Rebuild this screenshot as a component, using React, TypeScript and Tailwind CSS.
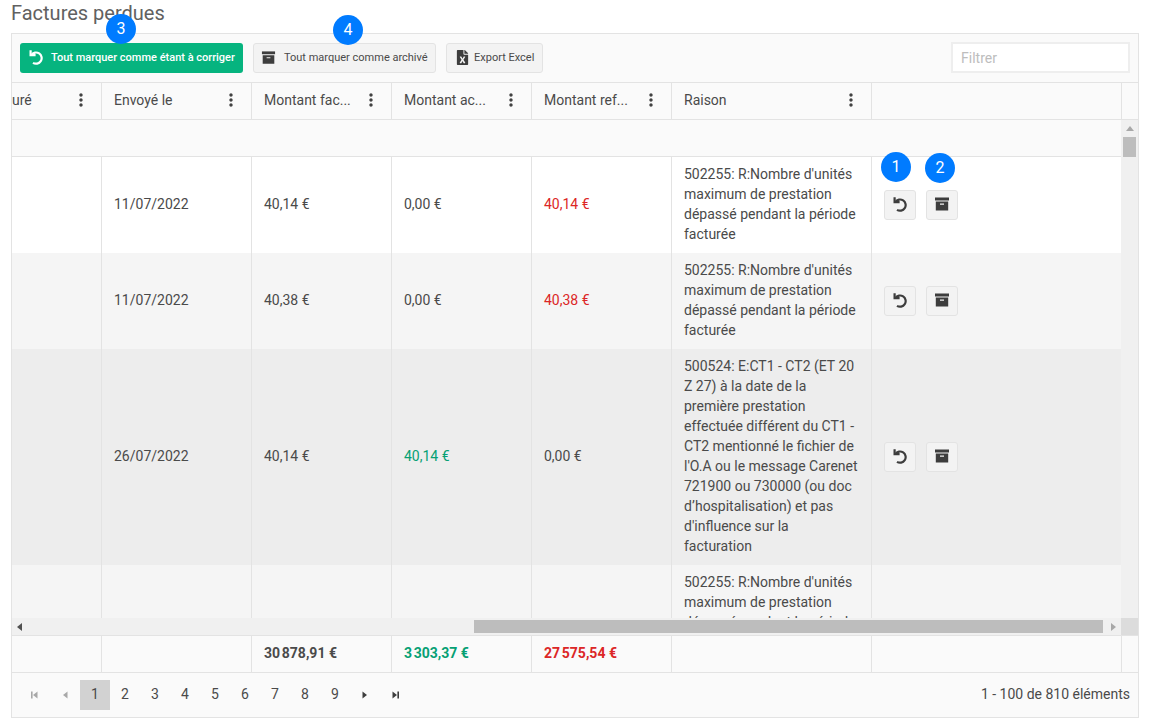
import { MdMoreVert } from "react-icons/md";
import { FaFileExcel } from "react-icons/fa";

const UndoIcon = ({ size = 16, color = "#3d3d3d" }: { size?: number; color?: string }) => (
  <svg width={size} height={size} viewBox="0 0 16 16" fill="none" stroke={color} strokeWidth="2.2">
    <path d="M2.6 1.2v5h5" />
    <path d="M3.4 6 A5.6 5.6 0 1 1 5 13.8" />
  </svg>
);

const ArchiveIcon = ({ size = 16 }: { size?: number }) => (
  <svg width={size} height={size} viewBox="0 0 16 16" fill="#3d3d3d">
    <rect x="1" y="1.5" width="14" height="3" />
    <path d="M1.8 5.6h12.4v9H1.8z M6 7.6v1.2h4V7.6z" fillRule="evenodd" />
  </svg>
);

const PagerArrow = ({ dir, bar, color }: { dir: "left" | "right"; bar?: boolean; color: string }) => (
  <svg width="8" height="8" viewBox="0 0 8 8" fill={color}>
    {dir === "left" ? <path d="M6.5 0.5v7L2 4z" /> : <path d="M1.5 0.5v7L6 4z" />}
    {bar && <rect x={dir === "left" ? 0 : 6.4} y="0.5" width="1.6" height="7" />}
  </svg>
);

const columns = ["uré", "Envoyé le", "Montant fac...", "Montant ac...", "Montant ref...", "Raison"];

const grid = "grid grid-cols-[90px_150px_140px_140px_140px_200px_250px]";
const cell = "border-r border-[#e3e3e3] px-3 flex items-center";

const reason1 =
  "502255: R:Nombre d'unités maximum de prestation dépassé pendant la période facturée";
const reason2 =
  "500524: E:CT1 - CT2 (ET 20 Z 27) à la date de la première prestation effectuée différent du CT1 - CT2 mentionné le fichier de l'O.A ou le message Carenet 721900 ou 730000 (ou doc d’hospitalisation) et pas d'influence sur la facturation";

const rows = [
  { date: "11/07/2022", fac: "40,14 €", ac: "0,00 €", ref: "40,14 €", reason: reason1, bg: "bg-white", h: "h-[96px]", acGreen: false, refRed: true },
  { date: "11/07/2022", fac: "40,38 €", ac: "0,00 €", ref: "40,38 €", reason: reason1, bg: "bg-[#f5f5f5]", h: "h-[96px]", acGreen: false, refRed: true },
  { date: "26/07/2022", fac: "40,14 €", ac: "40,14 €", ref: "0,00 €", reason: reason2, bg: "bg-[#ededed]", h: "h-[216px]", acGreen: true, refRed: false },
  { date: "", fac: "", ac: "", ref: "", reason: reason1, bg: "bg-[#f5f5f5]", h: "h-[96px]", acGreen: false, refRed: false },
];

const Badge = ({ n, className }: { n: number; className: string }) => (
  <span className={"absolute w-[30px] h-[30px] rounded-full bg-[#007bff] text-white text-[16px] flex items-center justify-center " + className}>
    {n}
  </span>
);

const IconButton = ({ children }: { children: React.ReactNode }) => (
  <button className="w-[32px] h-[30px] rounded-[3px] border border-[#e3e3e3] bg-[#f3f3f3] flex items-center justify-center pb-[2px]">
    {children}
  </button>
);

export default function App() {
  return (
    <div className="relative w-[1150px] h-[718px] overflow-hidden bg-white text-[#4a4a4a] font-['Roboto',sans-serif] pl-[11px]">
      <h1 className="text-[20px] leading-[27px] text-[#616161]">Factures perdues</h1>
      <div className="mt-[6px] w-[1128px] h-[685px] border border-[#e3e3e3] flex flex-col bg-[#fafafa]">
        {/* toolbar */}
        <div className="h-[49px] shrink-0 border-b border-[#e3e3e3] flex items-center pl-[8px] pr-[8px] gap-[10px] text-[11px]">
          <button className="h-[30px] w-[223px] rounded-[3px] bg-[#06b47f] text-white font-medium flex items-center pt-px pl-[8px] gap-[7px]">
            <span className="-mt-[3px]"><UndoIcon size={16} color="#ffffff" /></span>
            Tout marquer comme étant à corriger
          </button>
          <button className="h-[30px] w-[183px] rounded-[3px] border border-[#e3e3e3] bg-[#f3f3f3] flex items-center pt-px pl-[7px] gap-[8px]">
            <span className="-mt-[3px]"><ArchiveIcon size={15} /></span>
            Tout marquer comme archivé
          </button>
          <button className="h-[30px] w-[97px] rounded-[3px] border border-[#e3e3e3] bg-[#f3f3f3] flex items-center pt-px pl-[8px] gap-[4px]">
            <span className="-mt-[3px]"><FaFileExcel size={15} color="#3d3d3d" /></span>
            Export Excel
          </button>
          <input
            placeholder="Filtrer"
            className="ml-auto mb-px w-[179px] h-[31px] bg-white border-2 border-[#eeeeee] px-[8px] text-[14px] placeholder:text-[#bdbdbd]"
          />
        </div>
        {/* header */}
        <div className={grid + " h-[37px] shrink-0 border-b border-[#e3e3e3] text-[14px] relative"}>
          {columns.map((c, i) => (
            <div key={c} className={cell + " justify-between pr-[10px] pb-[2px]" + (i === 0 ? " pl-0" : "")}>
              <span>{c}</span>
              <MdMoreVert size={20} color="#424242" />
            </div>
          ))}
          <div className="border-r border-[#e3e3e3]" />
        </div>
        {/* body */}
        <div className="relative flex-1 min-h-0 overflow-hidden text-[14px]">
          <div className={grid + " h-[37px] border-b border-[#e3e3e3]"}>
            {[0, 1, 2, 3, 4, 5, 6].map((i) => <div key={i} />)}
          </div>
          {rows.map((r, i) => (
            <div key={i} className={grid + " " + r.h + " " + r.bg}>
              <div className={cell} />
              <div className={cell + " pb-[2px]"}>{r.date}</div>
              <div className={cell + " pb-[2px]"}>{r.fac}</div>
              <div className={cell + " pb-[2px]" + (r.acGreen ? " text-[#06a074]" : "")}>{r.ac}</div>
              <div className={cell + " pb-[2px]" + (r.refRed ? " text-[#dc2626]" : "")}>{r.ref}</div>
              <div className={cell + " leading-[20px] pb-[2px]"}>{r.reason}</div>
              <div className="flex items-center pl-[12px] gap-[10px]">
                {r.date && (
                  <>
                    <IconButton><UndoIcon size={16} /></IconButton>
                    <IconButton><ArchiveIcon size={16} /></IconButton>
                  </>
                )}
              </div>
            </div>
          ))}
          {/* vertical scrollbar */}
          <div className="absolute right-0 top-0 w-[17px] h-[515px] bg-[#f0f0f0] flex flex-col items-center">
            <span className="mt-[6px] w-0 h-0 border-x-4 border-x-transparent border-b-[5px] border-b-[#a8a8a8]" />
            <span className="mt-[6px] w-[13px] h-[20px] bg-[#bdbdbd]" />
            <span className="mt-auto mb-[6px] w-0 h-0 border-x-4 border-x-transparent border-t-[5px] border-t-[#505050]" />
          </div>
          {/* horizontal scrollbar */}
          <div className="absolute left-0 right-0 bottom-0 h-[17px] bg-[#f0f0f0] flex items-center pl-[5px] pr-[17px]">
            <span className="w-0 h-0 border-y-4 border-y-transparent border-r-[5px] border-r-[#505050]" />
            <span className="ml-[452px] w-[629px] h-[13px] bg-[#bdbdbd]" />
            <span className="ml-[8px] w-0 h-0 border-y-4 border-y-transparent border-l-[5px] border-l-[#a8a8a8]" />
            <span className="absolute right-0 top-0 w-[17px] h-[17px] bg-[#dcdcdc]" />
          </div>
        </div>
        {/* footer */}
        <div className={grid + " h-[38px] shrink-0 border-y border-[#e3e3e3] text-[14px] font-bold"}>
          <div className={cell} />
          <div className={cell} />
          <div className={cell + " pb-[2px]"}>{"30\u202f878,91 €"}</div>
          <div className={cell + " pb-[2px] text-[#06a074]"}>{"3\u202f303,37 €"}</div>
          <div className={cell + " pb-[2px] text-[#dc2626]"}>{"27\u202f575,54 €"}</div>
          <div className={cell} />
          <div className={cell} />
        </div>
        {/* pager */}
        <div className="h-[44px] shrink-0 flex items-center pl-[8px] pr-[8px] pb-[1px] text-[14px]">
          <span className="w-[30px] h-[30px] flex items-center justify-center"><PagerArrow dir="left" bar color="#a8a8a8" /></span>
          <span className="w-[30px] h-[30px] flex items-center justify-center"><PagerArrow dir="left" color="#a8a8a8" /></span>
          {[1, 2, 3, 4, 5, 6, 7, 8, 9].map((n) => (
            <span key={n} className={"w-[30px] h-[30px] flex items-center justify-center " + (n === 1 ? "bg-[#d2d2d2]" : "")}>{n}</span>
          ))}
          <span className="w-[30px] h-[30px] flex items-center justify-center"><PagerArrow dir="right" color="#3d3d3d" /></span>
          <span className="w-[30px] h-[30px] flex items-center justify-center"><PagerArrow dir="right" bar color="#3d3d3d" /></span>
          <span className="ml-auto">1 - 100 de 810 éléments</span>
        </div>
      </div>
      <Badge n={3} className="left-[106px] top-[14px]" />
      <Badge n={4} className="left-[333px] top-[15px]" />
      <Badge n={1} className="left-[881px] top-[152px]" />
      <Badge n={2} className="left-[925px] top-[153px]" />
    </div>
  );
}
